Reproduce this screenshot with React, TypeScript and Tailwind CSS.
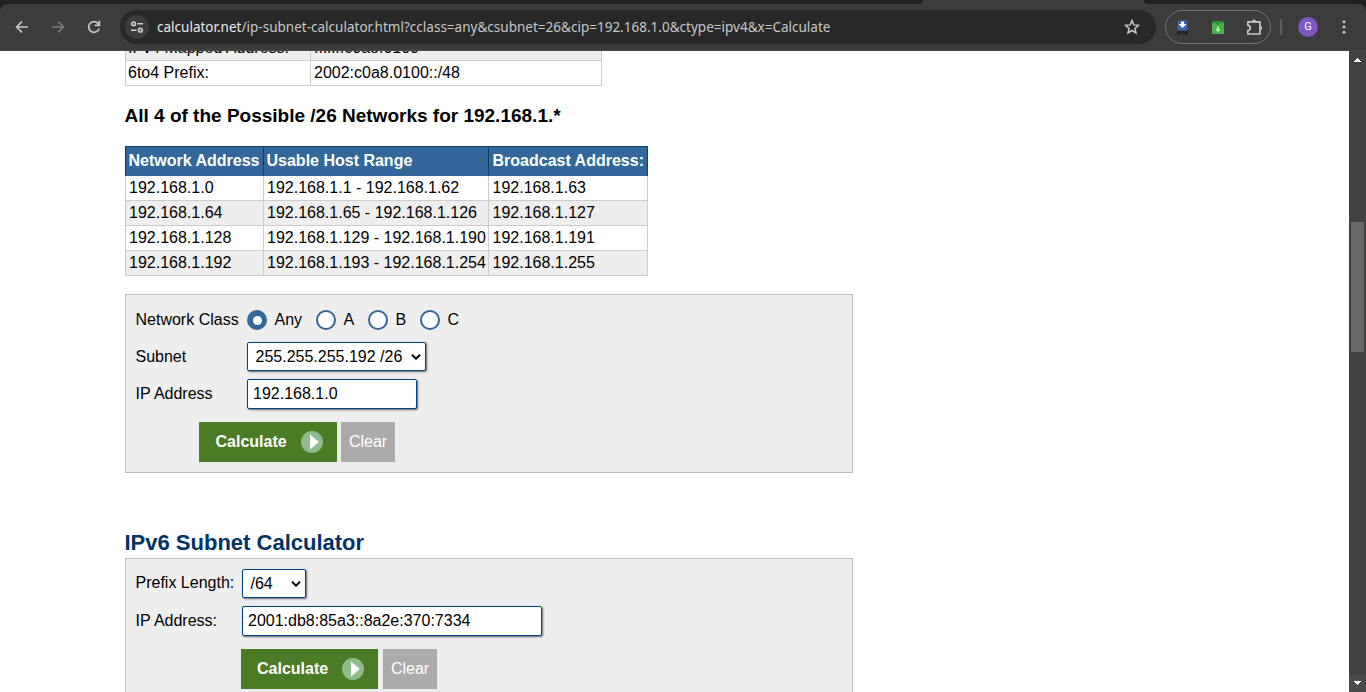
import React from "react";

const networks = [
  ["192.168.1.0", "192.168.1.1 - 192.168.1.62", "192.168.1.63"],
  ["192.168.1.64", "192.168.1.65 - 192.168.1.126", "192.168.1.127"],
  ["192.168.1.128", "192.168.1.129 - 192.168.1.190", "192.168.1.191"],
  ["192.168.1.192", "192.168.1.193 - 192.168.1.254", "192.168.1.255"],
];

function Toolbar() {
  return (
    <header className="h-[51px] shrink-0 bg-[#1f2221]">
      <div className="flex h-1 items-stretch bg-[#3c3c3c]">
        <div className="w-[923px] rounded-br-[4px] bg-[#1f2221]" />
        <div className="w-[221px] bg-[#3c3c3c]" />
        <div className="flex-1 rounded-bl-[4px] bg-[#1f2221]" />
      </div>
      <div className="flex h-[47px] items-center rounded-t-lg border-b border-[#474747] bg-[#3c3c3c]">
        <svg className="ml-[15px] size-[14px] shrink-0" viewBox="0 0 14 14" fill="none" stroke="#c7c7c7" strokeWidth="1.7">
          <path d="M13 7H2M7 1.6 1.6 7 7 12.4" />
        </svg>
        <svg className="ml-[22px] size-[14px] shrink-0" viewBox="0 0 14 14" fill="none" stroke="#7c7c7c" strokeWidth="1.7">
          <path d="M1 7h11M7 1.6 12.4 7 7 12.4" />
        </svg>
        <svg className="ml-[22px] size-[14px] shrink-0" viewBox="0 0 14 14" fill="none" stroke="#c7c7c7" strokeWidth="1.7">
          <path d="M12.1 8.4A5.3 5.3 0 1 1 10.9 3.4L12.4 5M12.4 .8V5.3H7.8" />
        </svg>
        <div className="ml-[19px] flex h-[34px] w-[1036px] shrink-0 items-center rounded-full bg-[#282828]">
          <div className="ml-[5px] flex size-6 items-center justify-center rounded-full bg-[#3c3c3c]">
            <svg className="size-[14px]" viewBox="0 0 14 14" fill="none" stroke="#d0d0d0" strokeWidth="1.6">
              <circle cx="3.6" cy="3.8" r="1.8" />
              <path d="M7.5 3.8H13M1 10.2h5.5" />
              <circle cx="10.4" cy="10.2" r="1.8" />
            </svg>
          </div>
          <span className="ml-2 whitespace-nowrap font-['Noto_Sans',sans-serif] text-[13.5px] tracking-[0.01px] text-[#c7c7c7]">
            <span className="text-[#e8e8e8]">calculator.net</span>/ip-subnet-calculator.html?cclass=any&amp;csubnet=26&amp;cip=192.168.1.0&amp;ctype=ipv4&amp;x=Calculate
          </span>
          <svg className="mr-4 ml-auto size-4" viewBox="0 0 16 16" fill="none" stroke="#c7c7c7" strokeWidth="1.5">
            <path d="m8 1.600 1.800 4.300 4.700.4-3.600 3.100 1.100 4.600L8 11.500 4 14l1.100-4.600L1.500 6.300l4.700-.4z" />
          </svg>
        </div>
        <div className="ml-[9px] flex h-[34px] w-[106px] shrink-0 items-center rounded-full border border-[#757575]">
          <svg className="ml-[11px] h-[15px] w-[11px] shrink-0" viewBox="0 0 11 15">
            <rect x=".5" y=".5" width="10" height="10" fill="#3b62ab" />
            <path d="M4 1.500h3V4h2.500L5.500 8 1.500 4H4z" fill="#fff" />
            <text x="5.500" y="13.500" textAnchor="middle" fontSize="6" fontFamily="Liberation Sans" fontWeight="bold" fill="#101010">png</text>
          </svg>
          <svg className="ml-[23px] size-[13px] shrink-0" viewBox="0 0 13 13">
            <path d="M2 0h9l2 2v11H1V2z" fill="#4caf50" />
            <path d="M2 0h9l2 2h-3.500L7 4.500 4.500 2H1z" fill="#2e8b35" />
            <path d="M6.200 5.500h1.600v2.800h1.700L7 11 4.500 8.300h1.700z" fill="#d7ff8a" />
          </svg>
          <svg className="ml-[22px] size-[17px] shrink-0" viewBox="0 0 17 17" fill="none" stroke="#c7c7c7" strokeWidth="1.7">
            <path d="M1.800 2.800H14V15H1.800V11.600Q4.300 11 4.300 8.900T1.800 6.200z" strokeLinejoin="round" />
            <path d="M6 2.600a2 2 0 0 1 4 0zM14.300 7a2 2 0 0 1 0 4z" fill="#c7c7c7" stroke="none" />
          </svg>
        </div>
        <div className="ml-[9px] h-4 w-[2px] bg-[#5e5e5e]" />
        <div className="ml-4 flex size-5 items-center justify-center rounded-full bg-[#7e57c2] font-[Roboto,sans-serif] text-[11px] text-white">G</div>
        <svg className="ml-[24px] h-[14px] w-1" viewBox="0 0 4 14" fill="#c7c7c7">
          <circle cx="2" cy="1.700" r="1.500" />
          <circle cx="2" cy="7" r="1.500" />
          <circle cx="2" cy="12.300" r="1.500" />
        </svg>
      </div>
    </header>
  );
}

function Scrollbar() {
  return (
    <div className="flex w-[17px] shrink-0 flex-col items-center bg-[#424242]">
      <svg className="mt-[7px] h-1 w-[7px]" viewBox="0 0 7 4" fill="#fff" shapeRendering="crispEdges">
        <path d="M3 0h1v1h1v1h1v1h1v1H0V3h1V2h1V1h1z" />
      </svg>
      <div className="mt-[160px] h-[130px] w-[13px] bg-[#686868]" />
      <div className="mt-auto flex h-[17px] w-full justify-center bg-[#4a4a4a]">
        <svg className="mt-[6px] h-1 w-[7px]" viewBox="0 0 7 4" fill="#fff" shapeRendering="crispEdges">
          <path d="M0 0h7v1H6v1H5v1H4v1H3V3H2V2H1V1H0z" />
        </svg>
      </div>
    </div>
  );
}

function Select({ value, className }: { value: string; className: string }) {
  return (
    <div className={`flex h-[29px] items-center justify-between rounded-[2px] border border-[#004283] bg-white pr-1 pl-[7.5px] shadow-[1px_1px_2px_#666] ${className}`}>
      <span>{value}</span>
      <svg className="h-[6px] w-[10px]" viewBox="0 0 10 6" fill="none" stroke="#000" strokeWidth="2">
        <path d="M1 .8 5 4.600 9 .8" />
      </svg>
    </div>
  );
}

function TextBox({ value, className }: { value: string; className: string }) {
  return (
    <div className={`flex h-[30px] items-center rounded-[2px] border border-[#004283] bg-white pl-[5px] shadow-[1px_1px_2px_#666] ${className}`}>
      {value}
    </div>
  );
}

function Buttons({ className, labelInset }: { className: string; labelInset: string }) {
  return (
    <div className={`flex h-10 ${className}`}>
      <button className={`flex flex-1 items-center bg-[#4b7b25] text-left font-bold text-white ${labelInset}`}>
        Calculate
        <svg className="ml-[14px] size-[22px]" viewBox="0 0 22 22">
          <circle cx="11" cy="11" r="11" fill="#90bb8e" />
          <path d="M9 3.500 18 11 9 18.500z" fill="#fff" />
        </svg>
      </button>
      <button className="w-[54px] bg-[#ababab] text-white">Clear</button>
    </div>
  );
}

function Radio({ label, checked, className }: { label: string; checked?: boolean; className: string }) {
  return (
    <label className={`flex items-center gap-[7.5px] ${className}`}>
      <span className={checked ? "flex size-5 items-center justify-center rounded-full bg-[#336699]" : "size-5 rounded-full border-2 border-[#336699] bg-white"}>
        {checked && <span className="size-[9px] rounded-full bg-white" />}
      </span>
      {label}
    </label>
  );
}

export default function App() {
  return (
    <div className="flex h-[692px] w-[1366px] flex-col overflow-hidden bg-white font-['Liberation_Sans',Arial,sans-serif] text-[16px] leading-[24px] text-black">
      <Toolbar />
      <div className="flex min-h-0 flex-1">
        <main className="min-w-0 flex-1 overflow-hidden pl-[125px]">
          <div className="-mt-4 w-[477px] border border-b-0 border-[#ccc]">
            <div className="flex h-[25px] border-b border-[#ccc] bg-[#eee]">
              <div className="w-[185px] border-r border-[#ccc] pl-[2px]">IPv4 Mapped Address:</div>
              <div className="pl-[3px]">::ffff:c0a8.0100</div>
            </div>
            <div className="flex h-[25px] border-b border-[#ccc]">
              <div className="w-[185px] border-r border-[#ccc] pl-[2px]">6to4 Prefix:</div>
              <div className="pl-[3px]">2002:c0a8.0100::/48</div>
            </div>
          </div>

          <h3 className="mt-[18px] -ml-[0.5px] text-[19px] font-bold">All 4 of the Possible /26 Networks for 192.168.1.*</h3>

          <div className="mt-[18px] w-[523px]">
            <div className="grid h-[30px] grid-cols-[138px_225px_160px] border-t border-[#143b6e] bg-[#336699] leading-[28px] font-bold text-white">
              <div className="border-l border-[#143b6e] pl-[2.500px]">Network Address</div>
              <div className="border-l border-[#143b6e] pl-[2.500px]">Usable Host Range</div>
              <div className="border-x border-[#143b6e] pl-[3.500px]">Broadcast Address:</div>
            </div>
            {networks.map((row, i) => (
              <div key={row[0]} className={`grid h-[25px] grid-cols-[138px_225px_160px] border-b border-[#ccc] ${i % 2 ? "bg-[#eee]" : "bg-white"}`}>
                <div className="border-l border-[#ccc] pl-[3px]">{row[0]}</div>
                <div className="border-l border-[#ccc] pl-[3px]">{row[1]}</div>
                <div className="border-x border-[#ccc] pl-[3.500px]">{row[2]}</div>
              </div>
            ))}
          </div>

          <section className="mt-[18px] h-[179px] w-[728px] border border-[#bbb] bg-[#eee] pt-[15px] pl-[9.500px]">
            <div className="flex h-5 items-center">
              <span className="w-[111.500px]">Network Class</span>
              <Radio label="Any" checked className="w-[69px]" />
              <Radio label="A" className="w-[52px]" />
              <Radio label="B" className="w-[52px]" />
              <Radio label="C" className="w-[52px]" />
            </div>
            <div className="mt-3 flex items-center">
              <span className="w-[111.500px]">Subnet</span>
              <Select value="255.255.255.192 /26" className="w-[179px]" />
            </div>
            <div className="mt-2 flex items-center">
              <span className="w-[111.500px]">IP Address</span>
              <TextBox value="192.168.1.0" className="w-[170px]" />
            </div>
            <Buttons className="mt-[13px] ml-[63.500px] w-[196px] gap-1" labelInset="pl-[16.500px]" />
          </section>

          <h2 className="mt-[57px] -ml-[0.5px] text-[22px] leading-[26px] font-bold text-[#003366]">IPv6 Subnet Calculator</h2>
          <section className="mt-[2px] h-[180px] w-[728px] border border-[#bbb] bg-[#eee] pt-[10px] pl-[9.500px]">
            <div className="flex items-center">
              <span className="w-[106.500px] pb-[2px]">Prefix Length:</span>
              <Select value="/64" className="w-[64px]" />
            </div>
            <div className="mt-2 flex items-center">
              <span className="w-[106.500px]">IP Address:</span>
              <TextBox value="2001:db8:85a3::8a2e:370:7334" className="w-[300px]" />
            </div>
            <Buttons className="mt-[13px] ml-[105.500px] w-[196px] gap-[5px]" labelInset="pl-4" />
          </section>
        </main>
        <Scrollbar />
      </div>
    </div>
  );
}
